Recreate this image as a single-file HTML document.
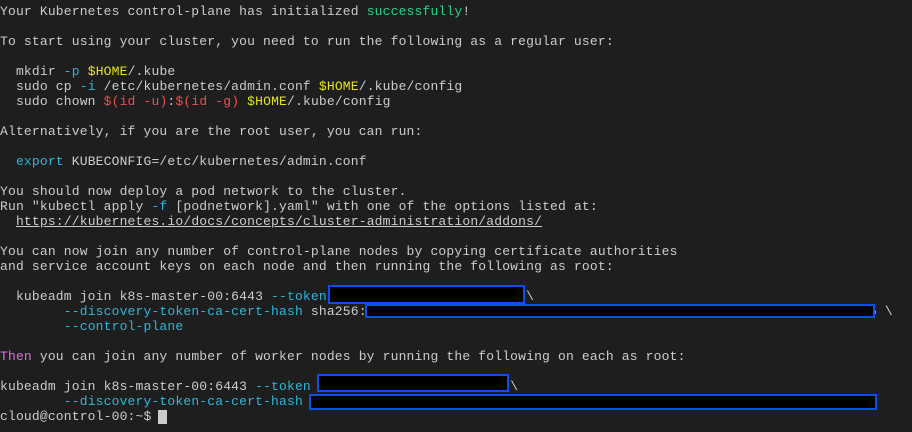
<!DOCTYPE html>
<html><head><meta charset="utf-8"><style>
html,body{margin:0;padding:0;background:#1e1e1e;width:912px;height:432px;overflow:hidden}
pre{margin:0;padding:4px 0 0 0;font-family:"Liberation Mono",monospace;font-size:13px;letter-spacing:0.17px;line-height:15px;color:#cccccc;white-space:pre}
.g{color:#23d18b}.c{color:#29b8db}.y{color:#e5e510}.r{color:#f14c4c}.m{color:#e070e0}
.u{text-decoration:underline}
.box{position:absolute;background:#000;border:2px solid #0a4ff0;box-sizing:border-box}
.cur{position:absolute;left:158px;top:410px;width:9px;height:14px;background:#cccccc}
</style></head><body>
<pre>Your Kubernetes control-plane has initialized <span class="g">successfully</span>!

To start using your cluster, you need to run the following as a regular user:

  mkdir <span class="c">-p</span> <span class="y">$HOME</span>/.kube
  sudo cp <span class="c">-i</span> /etc/kubernetes/admin.conf <span class="y">$HOME</span>/.kube/config
  sudo chown <span class="r">$(id -u)</span>:<span class="r">$(id -g)</span> <span class="y">$HOME</span>/.kube/config

Alternatively, if you are the root user, you can run:

  <span class="c">export</span> KUBECONFIG=/etc/kubernetes/admin.conf

You should now deploy a pod network to the cluster.
Run "kubectl apply <span class="c">-f</span> [podnetwork].yaml" with one of the options listed at:
  <span class="u">https://kubernetes.io/docs/concepts/cluster-administration/addons/</span>

You can now join any number of control-plane nodes by copying certificate authorities
and service account keys on each node and then running the following as root:

  kubeadm join k8s-master-00:6443 <span class="c">--token</span>                         \
        <span class="c">--discovery-token-ca-cert-hash</span> sha256:                                                               5 \
        <span class="c">--control-plane</span>

<span class="m">Then</span> you can join any number of worker nodes by running the following on each as root:

kubeadm join k8s-master-00:6443 <span class="c">--token</span>                         \
        <span class="c">--discovery-token-ca-cert-hash</span>
cloud@control-00:~$ </pre>
<div class="box" style="left:328px;top:285px;width:197px;height:19px"></div>
<div class="box" style="left:365px;top:304px;width:510px;height:14px"></div>
<div class="box" style="left:317px;top:374px;width:192px;height:18px"></div>
<div class="box" style="left:309px;top:394px;width:568px;height:16px"></div>
<div class="cur"></div>
</body></html>
